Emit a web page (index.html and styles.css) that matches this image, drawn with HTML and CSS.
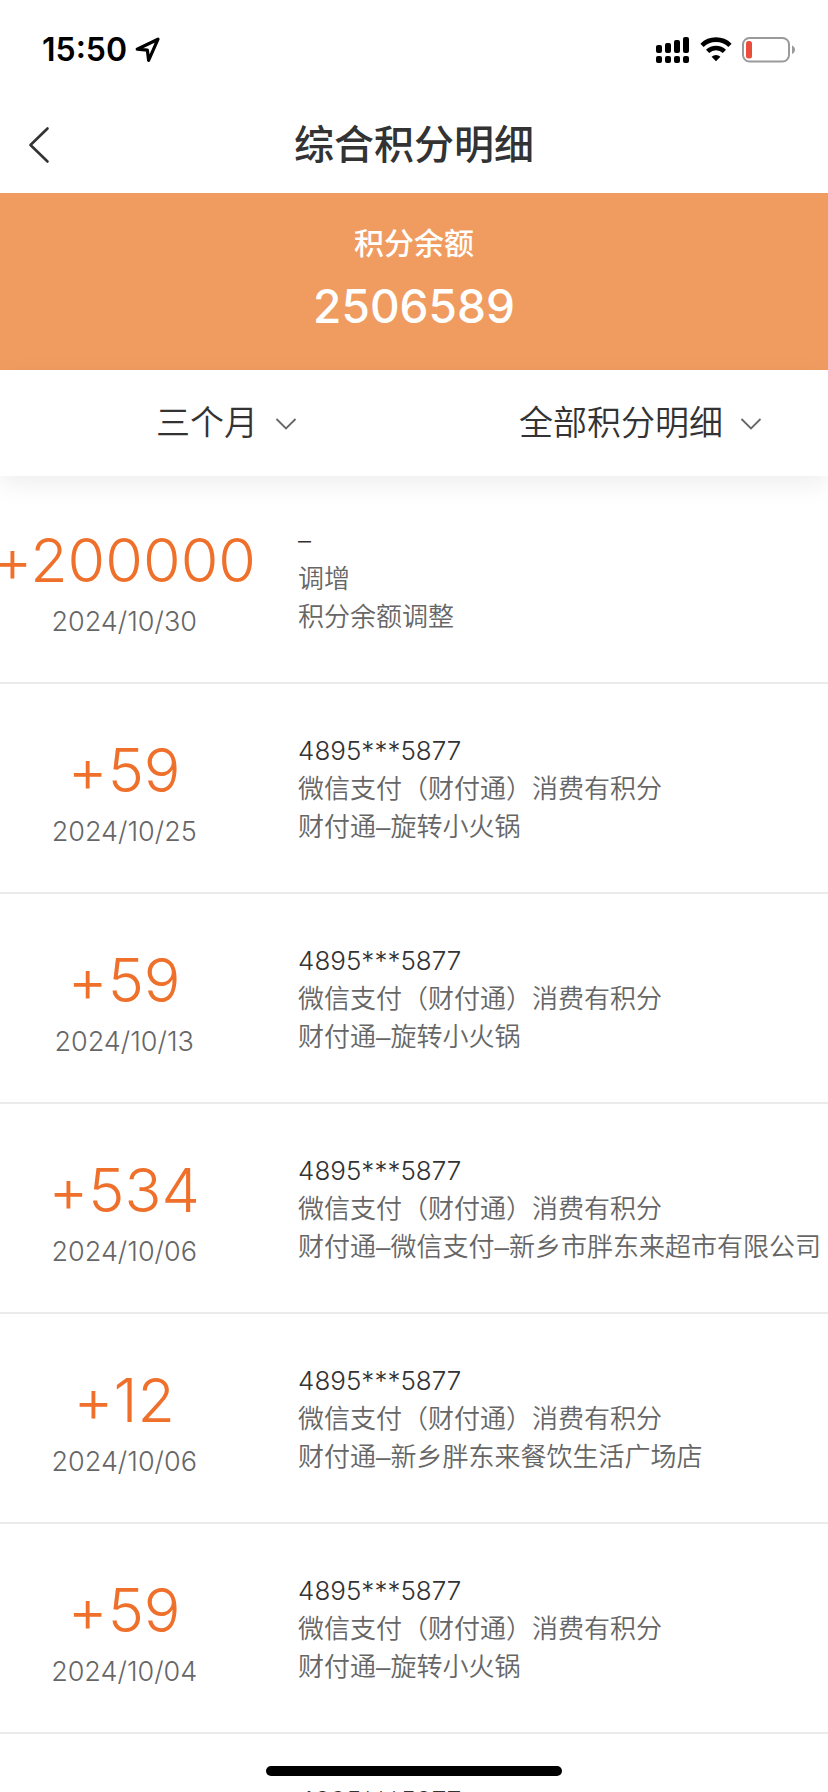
FILE: index.html
```html
<!DOCTYPE html>
<html lang="zh-CN">
<head>
<meta charset="utf-8">
<meta name="viewport" content="width=device-width, initial-scale=1">
<title>综合积分明细</title>
<link rel="stylesheet" href="styles.css">
</head>
<body>
<div class="app">
  <div class="status">
    <div class="status-left">
      <span class="clock">15:50</span>
      <svg class="icon-location" viewBox="0 0 26 26" width="26" height="26" aria-hidden="true"><path d="M2.2 12.2 23 2.2 13.6 23.4 12.4 13.2Z" fill="none" stroke="#000" stroke-width="3.2" stroke-linejoin="round"/></svg>
    </div>
    <div class="status-right">
      <svg viewBox="0 0 34 26" width="34" height="26" aria-hidden="true">
        <rect x="0" y="8" width="6" height="8" rx="2"/><rect x="9" y="6" width="6" height="10" rx="2"/><rect x="18" y="3" width="6" height="13" rx="2"/><rect x="27" y="0" width="6" height="16" rx="2"/>
        <rect x="0" y="19" width="6" height="7" rx="2"/><rect x="9" y="19" width="6" height="7" rx="2"/><rect x="18" y="19" width="6" height="7" rx="2"/><rect x="27" y="19" width="6" height="7" rx="2"/>
      </svg>
      <svg class="icon-wifi" viewBox="0 0 32 26" width="32" height="26" aria-hidden="true">
        <path d="M2 8.3a20 20 0 0 1 28 0M7.6 14.4a12 12 0 0 1 16.8 0" fill="none" stroke="#000" stroke-width="4.6"/>
        <path d="M16 24.2 11.6 19.7a6.4 6.4 0 0 1 8.8 0Z"/>
      </svg>
      <svg class="icon-battery" viewBox="0 0 54 26" width="54" height="26" aria-hidden="true">
        <rect x="1" y="1" width="46" height="23.5" rx="6.5" fill="none" stroke="#9a9a9a" stroke-width="2"/>
        <rect x="4" y="4" width="6" height="17.5" rx="2.5" fill="#eb4d3d"/>
        <path d="M50 8.5c4 1.2 4 7.3 0 8.5Z" fill="#9a9a9a"/>
      </svg>
    </div>
  </div>

  <header class="nav">
    <button class="back" type="button" aria-label="返回">
      <svg viewBox="0 0 22 38" width="22" height="38" aria-hidden="true"><path d="M19.5 2.5 2.5 19 19.5 35.5" fill="none" stroke="#333" stroke-width="2.6" stroke-linecap="round" stroke-linejoin="round"/></svg>
    </button>
    <h1 class="title">综合积分明细</h1>
  </header>

  <section class="balance">
    <div class="balance-label">积分余额</div>
    <div class="balance-value">2506589</div>
  </section>

  <form class="filters">
    <div class="filter">
      <select class="filter-select" aria-label="时间范围"><option>三个月</option></select>
      <svg class="chevron" viewBox="0 0 22 14" width="22" height="14" aria-hidden="true"><path d="M1.5 2 11 11.5 20.5 2" fill="none" stroke="#666" stroke-width="1.8"/></svg>
    </div>
    <div class="filter">
      <select class="filter-select" aria-label="明细类型"><option>全部积分明细</option></select>
      <svg class="chevron" viewBox="0 0 22 14" width="22" height="14" aria-hidden="true"><path d="M1.5 2 11 11.5 20.5 2" fill="none" stroke="#666" stroke-width="1.8"/></svg>
    </div>
  </form>

  <ul class="records">
    <li class="record">
      <div class="points"><span class="amount">+200000</span><time class="date">2024/10/30</time></div>
      <div class="detail"><p class="card">–</p><p>调增</p><p>积分余额调整</p></div>
    </li>
    <li class="record">
      <div class="points"><span class="amount">+59</span><time class="date">2024/10/25</time></div>
      <div class="detail"><p class="card">4895***5877</p><p>微信支付（财付通）消费有积分</p><p>财付通–旋转小火锅</p></div>
    </li>
    <li class="record">
      <div class="points"><span class="amount">+59</span><time class="date">2024/10/13</time></div>
      <div class="detail"><p class="card">4895***5877</p><p>微信支付（财付通）消费有积分</p><p>财付通–旋转小火锅</p></div>
    </li>
    <li class="record">
      <div class="points"><span class="amount">+534</span><time class="date">2024/10/06</time></div>
      <div class="detail"><p class="card">4895***5877</p><p>微信支付（财付通）消费有积分</p><p>财付通–微信支付–新乡市胖东来超市有限公司</p></div>
    </li>
    <li class="record">
      <div class="points"><span class="amount">+12</span><time class="date">2024/10/06</time></div>
      <div class="detail"><p class="card">4895***5877</p><p>微信支付（财付通）消费有积分</p><p>财付通–新乡胖东来餐饮生活广场店</p></div>
    </li>
    <li class="record">
      <div class="points"><span class="amount">+59</span><time class="date">2024/10/04</time></div>
      <div class="detail"><p class="card">4895***5877</p><p>微信支付（财付通）消费有积分</p><p>财付通–旋转小火锅</p></div>
    </li>
    <li class="record">
      <div class="points"></div>
      <div class="detail"><p class="card">4895***5877</p></div>
    </li>
  </ul>
  <div class="home-indicator"></div>
</div>
</body>
</html>
```
FILE: styles.css
```css
* {
  box-sizing: border-box;
}

body {
  margin: 0;
  background: #fff;
  color: #333;
  font-family: Inter, "Noto Sans CJK SC", sans-serif;
}

.app {
  display: flex;
  flex-direction: column;
  height: 100vh;
  overflow: hidden;
}

.status {
  display: flex;
  flex-shrink: 0;
  align-items: center;
  justify-content: space-between;
  height: 100px;
  padding: 0 32px 0 42px;
  color: #000;
}

.status-left,
.status-right {
  display: flex;
  align-items: center;
}

.status-left {
  gap: 8px;
}

.status-right {
  gap: 10px;
}

.clock {
  font-size: 32px;
  font-weight: 600;
  line-height: 40px;
}

.nav {
  display: grid;
  grid-template-columns: 78px 1fr 78px;
  flex-shrink: 0;
  align-items: center;
  height: 93px;
  padding-bottom: 4px;
}

.back {
  display: flex;
  padding: 8px 28px;
  border: 0;
  background: none;
}

.title {
  margin: 0;
  font-size: 40px;
  font-weight: 500;
  line-height: 56px;
  text-align: center;
}

.balance {
  flex-shrink: 0;
  height: 177px;
  padding-top: 28px;
  background: #f09c61;
  color: #fff;
  font-weight: 500;
  text-align: center;
}

.balance-label {
  font-size: 30px;
  line-height: 44px;
}

.balance-value {
  margin-top: 8px;
  font-size: 46px;
  line-height: 66px;
}

.filters {
  position: relative;
  z-index: 1;
  display: grid;
  grid-template-columns: 1fr 1fr;
  flex-shrink: 0;
  place-items: center;
  height: 106px;
  background: #fff;
  box-shadow: 0 8px 24px rgba(0, 0, 0, 0.07);
}

.filter {
  position: relative;
}

.filter-select {
  display: block;
  padding: 0;
  border: 0;
  appearance: none;
  background: none;
  color: #333;
  font-family: inherit;
  font-size: 34px;
  font-weight: 350;
  line-height: 50px;
}

.chevron {
  position: absolute;
  top: 50%;
  left: 100%;
  margin: -6px 0 0 17px;
}

.records {
  flex: 1;
  min-height: 0;
  margin: 0;
  padding: 0;
  overflow: hidden;
  list-style: none;
}

.record {
  display: flex;
  height: 210px;
  padding-top: 46px;
  border-bottom: 2px solid #ebebeb;
}

.record:first-child {
  height: 208px;
  padding-top: 44px;
}

.points {
  display: flex;
  flex-direction: column;
  flex: 0 0 30%;
  align-items: center;
  min-width: 0;
}

.amount {
  color: #ee702b;
  font-size: 61px;
  font-weight: 300;
  font-feature-settings: "calt" 0;
  line-height: 80px;
}

.date {
  margin-top: 2px;
  color: #666;
  font-size: 27px;
  font-weight: 300;
  line-height: 40px;
}

.detail {
  flex: 1;
  min-width: 0;
  padding: 2px 0 0 6%;
  color: #666;
  font-family: "Liberation Sans", "Noto Sans CJK SC", sans-serif;
  font-size: 26px;
  font-weight: 350;
  line-height: 38px;
  white-space: nowrap;
}

.detail p {
  margin: 0;
}

.detail .card {
  color: #333;
  font-family: Inter, sans-serif;
  font-weight: 300;
}

.home-indicator {
  position: fixed;
  bottom: 16px;
  left: 50%;
  z-index: 2;
  width: 296px;
  height: 10px;
  border-radius: 5px;
  background: #000;
  transform: translateX(-50%);
}
```
